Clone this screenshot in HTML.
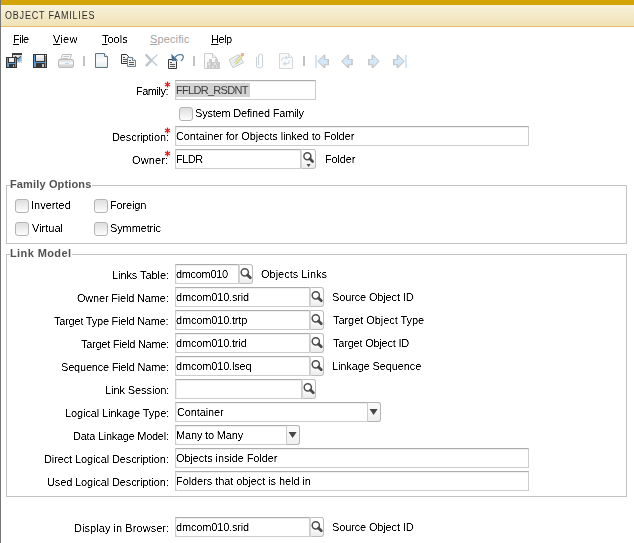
<!DOCTYPE html><html><head><meta charset="utf-8"><style>
*{margin:0;padding:0}
html,body{width:634px;height:543px;overflow:hidden;background:#fff}
body{position:relative;font-family:"Liberation Sans",sans-serif}
.r{position:absolute}
.ic{position:absolute;left:0;top:0}
.t{position:absolute;font:11px/13px "Liberation Sans",sans-serif;letter-spacing:-0.2px;white-space:pre;color:#000;background:#fff;filter:contrast(2.2)}
.menu u{text-decoration:underline;text-underline-offset:1px}
.title{position:absolute;font:10px/13px "Liberation Sans",sans-serif;letter-spacing:0.15px;color:#333;white-space:pre}
.tf{position:absolute;box-sizing:border-box;border:1px solid #cdcdcd;border-top-color:#acacac;background:#fff;box-shadow:inset 1px 1px 0 #efefef}
.sb{position:absolute;box-sizing:border-box;border:1px solid #bdbdbd;border-left-color:#d6d6d6;border-radius:0 3px 3px 0;background:linear-gradient(#fff 45%,#ececec)}
.sb svg{left:-1px;top:-1px}.db svg{left:0;top:-1px}
.db{position:absolute;box-sizing:border-box;border:1px solid #b3b3b3;border-left:0;border-radius:0 3px 3px 0;background:linear-gradient(#fbfbfb,#f0f0f0)}
.cb{position:absolute;width:14px;height:14px;box-sizing:border-box;border:1px solid #b4b4b4;border-radius:3px;background:linear-gradient(#dedede,#fdfdfd)}
.gb{position:absolute;box-sizing:border-box;border:1px solid #c2c2c2}
.gt{}
</style></head><body>
<div class="r" style="left:0;top:0;width:634px;height:5px;background:#d3a508"></div>
<div class="r" style="left:0;top:5px;width:634px;height:21px;background:linear-gradient(#f8f1da,#f0e2b6)"></div>
<div class="r" style="left:0;top:26px;width:634px;height:1px;background:#e9bd6a"></div>
<div class="t" style="left:5px;top:9.4px;font-size:10px;letter-spacing:0.88px;transform:scale(0.9,1);transform-origin:0 0;color:#2e2e2e;background:none;filter:none">OBJECT FAMILIES</div>
<div class="r" style="left:0;top:0;width:1px;height:543px;background:#777"></div>
<div class="t menu" style="left:13px;top:33px;letter-spacing:-0.500px;color:#000"><u>F</u>ile</div>
<div class="t menu" style="left:53px;top:33px;letter-spacing:0.250px;color:#000"><u>V</u>iew</div>
<div class="t menu" style="left:102px;top:33px;letter-spacing:0.000px;color:#000"><u>T</u>ools</div>
<div class="t menu" style="left:150px;top:33px;letter-spacing:0.125px;color:#a3a3a3;filter:none"><u>S</u>pecific</div>
<div class="t menu" style="left:211px;top:33px;letter-spacing:-0.500px;color:#000"><u>H</u>elp</div>
<svg class="ic" style="left:0;top:45px" width="420" height="30" viewBox="0 45 420 30" shape-rendering="auto"><defs><linearGradient id="gl" x1="0" y1="0" x2="0" y2="1"><stop offset="0" stop-color="#fafafa"/><stop offset="1" stop-color="#dadada"/></linearGradient><linearGradient id="gd" x1="0" y1="0" x2="0" y2="1"><stop offset="0" stop-color="#e6edf2"/><stop offset="0.5" stop-color="#fbfcfd"/><stop offset="1" stop-color="#dfe7ec"/></linearGradient></defs><rect x="12" y="53" width="10" height="2" fill="#3c3c3c" /><rect x="12" y="55" width="1" height="3" fill="#3c3c3c" /><rect x="13" y="55" width="9" height="8" fill="#e0e0e0" /><rect x="21" y="55" width="1" height="8" fill="#bcd3e3" /><path d="M15 56.5 L18 59 L21 56.5" stroke="#404040" stroke-width="1.3" fill="none"/><path d="M17.5 60.5 L21 57.5 M18 61.5 L21 59.8" stroke="#5ba3da" stroke-width="1.1" fill="none"/><rect x="6" y="57" width="11" height="11" fill="#363636" /><rect x="7" y="58" width="9" height="9" fill="#5a9ad0" /><rect x="8" y="57" width="7" height="6" fill="#363636" /><rect x="9" y="58" width="5" height="4" fill="#f0f0f0" /><rect x="9" y="64" width="6" height="4" fill="#363636" /><rect x="13" y="65" width="1" height="2" fill="#b8b8b8" /><rect x="33" y="54" width="14" height="14" fill="#363636" /><rect x="34" y="55" width="12" height="12" fill="#5a9ad0" /><rect x="35" y="54" width="10" height="8" fill="#363636" /><rect x="36" y="55" width="8" height="6" fill="url(#gl)"/><rect x="36" y="63" width="9" height="5" fill="#363636" /><rect x="42" y="64" width="2" height="3" fill="#c2c2c2" /><rect x="45" y="55" width="1" height="1" fill="#e8e8e8" /><path d="M62.5 54.5 H71.5 L69.5 60.5 H60.5 Z" fill="#f7f7f7" stroke="#bdbdbd"/><path d="M63.5 56.5 H69 M62.5 58.5 H68" stroke="#c4c4c4"/><rect x="58.5" y="59.5" width="15" height="8" rx="1.5" fill="#e4e4e4" stroke="#bcbcbc"/><rect x="59" y="62" width="14" height="2" fill="#f6f6f6" /><rect x="65" y="63" width="4" height="1" fill="#b5d6ee" /><rect x="59" y="65" width="14" height="2" fill="#d6d6d6" /><rect x="83" y="56" width="2" height="10" fill="#c3c3c3" /><rect x="193" y="56" width="2" height="10" fill="#c3c3c3" /><rect x="303" y="56" width="2" height="10" fill="#c3c3c3" /><path d="M95.5 53.5 H104.5 L107.5 56.5 V67.5 H95.5 Z" fill="url(#gd)" stroke="#5f7686"/><path d="M104.5 53.5 V56.5 H107.5" fill="#fff" stroke="#5f7686"/><path d="M121.5 54.5 H126.5 L128.5 56.5 V63.5 H121.5 Z" fill="#f2f2f2" stroke="#333"/><rect x="123" y="57" width="2" height="1" fill="#555" /><rect x="123" y="59" width="5" height="1" fill="#555" /><rect x="123" y="61" width="5" height="1" fill="#555" /><path d="M127.5 57.5 H132.5 L135.5 60.5 V66.5 H127.5 Z" fill="url(#gd)" stroke="#6b8597"/><path d="M132.5 57.5 V60.5 H135.5" fill="#fff" stroke="#6b8597"/><rect x="129" y="60" width="2" height="1" fill="#555" /><rect x="129" y="62" width="5" height="1" fill="#555" /><rect x="129" y="64" width="5" height="1" fill="#555" /><path d="M146.5 55.5 L157.2 65.8" stroke="#bcc8d0" stroke-width="1.3"/><path d="M146.5 65.3 L151.5 60.3" stroke="#bec6cc" stroke-width="2.4" stroke-linecap="round"/><path d="M151.5 60.3 L157.4 54.6" stroke="#b9cbd8" stroke-width="1.2"/><path d="M146.2 55.2 L150.8 59.8" stroke="#bec6cc" stroke-width="2.4" stroke-linecap="round"/><path d="M168.5 59.5 H174.5 L176.5 61.5 V68.5 H168.5 Z" fill="#efefef" stroke="#3a3a3a"/><rect x="170" y="62" width="2" height="1" fill="#555" /><rect x="170" y="64" width="5" height="1" fill="#555" /><rect x="170" y="66" width="5" height="1" fill="#555" /><path d="M171.3 53.8 L171.8 61 L178.2 60.6 Z" fill="#4a7393"/><path d="M175 57.3 Q177 54.5 180.5 54.5 Q183.5 54.8 183.3 57.5 Q183 59.5 181 60.8" stroke="#4c7595" stroke-width="1.15" fill="none"/><path d="M204.5 53.5 H212.5 L216.5 57.5 V68.5 H204.5 Z" fill="#fafafa" stroke="#cdcdcd"/><path d="M212.5 53.5 V57.5 H216.5" fill="#f0f0f0" stroke="#cdcdcd"/><rect x="209" y="59" width="3" height="3" fill="#cdcdcd" /><rect x="215" y="59" width="3" height="3" fill="#cdcdcd" /><rect x="207" y="62" width="7" height="7" fill="#cbcbcb" /><rect x="213" y="62" width="7" height="7" fill="#cbcbcb" /><rect x="208" y="63" width="2" height="2" fill="#e6e6e6" /><rect x="214" y="63" width="2" height="2" fill="#e6e6e6" /><rect x="209" y="65" width="1" height="3" fill="#dedede" /><rect x="216" y="65" width="1" height="3" fill="#dedede" /><rect x="212" y="66" width="2" height="2" fill="#e2e2e2" /><path d="M229 60 L238.5 54.5 L243.5 62.5 L233 67.8 Z" fill="#eef3f2" stroke="#bfc6c6" stroke-width="0.9"/><path d="M231 61.5 L239 57 M232.2 63.5 L240.3 59 M233.4 65.5 L241.5 61" stroke="#d6dede" stroke-width="0.8"/><path d="M235.5 63.5 L241.5 55.5" stroke="#b9c0c0" stroke-width="3.2"/><path d="M235.5 63.5 L241.5 55.5" stroke="#f3ec8c" stroke-width="1.9"/><rect x="241" y="53" width="3" height="3" fill="#e9b3a3" /><path d="M256.5 57 V66 Q256.5 68 259.5 68 Q262.5 68 262.5 66 V56 Q262.5 54 260.5 54 Q258.5 54 258.5 56 V65" fill="none" stroke="#c9d2d9" stroke-width="1"/><path d="M279.5 53.5 H288.5 L292.5 57.5 V68.5 H279.5 Z" fill="#fbfbfb" stroke="#d3d9dc"/><path d="M288.5 53.5 V57.5 H292.5" fill="#f0f2f3" stroke="#d3d9dc"/><path d="M281.8 61 V59.5 Q282 57.8 284.5 57.8 H286.5" fill="none" stroke="#c8dae6" stroke-width="1.1"/><path d="M285.5 55.6 L288.3 57.8 L285.5 60 Z" fill="#c8dae6"/><path d="M289.2 60.5 V62 Q289 63.8 286.5 63.8 H284.5" fill="none" stroke="#c8dae6" stroke-width="1.1"/><path d="M285.5 61.6 L282.7 63.8 L285.5 66 Z" fill="#c8dae6"/><path d="M317.20 61.3 L323.80 54.8 L325.40 54.8 L325.40 59 L329.00 59 L329.00 65.3 L325.40 65.3 L325.40 68.1 L323.80 68.1 Z" fill="#c6c6c6"/><path d="M318.50 61.3 L323.80 56.1 L323.80 59.7 L327.50 59.7 L327.50 64.3 L323.80 64.3 L323.80 66.6 Z" fill="#d3e9fa"/><rect x="315" y="55" width="2" height="13" fill="#d3e8f8" /><path d="M341.00 61.3 L347.60 54.8 L349.20 54.8 L349.20 59 L352.80 59 L352.80 65.3 L349.20 65.3 L349.20 68.1 L347.60 68.1 Z" fill="#c6c6c6"/><path d="M342.30 61.3 L347.60 56.1 L347.60 59.7 L351.30 59.7 L351.30 64.3 L347.60 64.3 L347.60 66.6 Z" fill="#d3e9fa"/><path d="M379.80 61.3 L373.20 54.8 L371.60 54.8 L371.60 59 L368.00 59 L368.00 65.3 L371.60 65.3 L371.60 68.1 L373.20 68.1 Z" fill="#c6c6c6"/><path d="M378.50 61.3 L373.20 56.1 L373.20 59.7 L369.50 59.7 L369.50 64.3 L373.20 64.3 L373.20 66.6 Z" fill="#d3e9fa"/><path d="M404.80 61.3 L398.20 54.8 L396.60 54.8 L396.60 59 L393.00 59 L393.00 65.3 L396.60 65.3 L396.60 68.1 L398.20 68.1 Z" fill="#c6c6c6"/><path d="M403.50 61.3 L398.20 56.1 L398.20 59.7 L394.50 59.7 L394.50 64.3 L398.20 64.3 L398.20 66.6 Z" fill="#d3e9fa"/><rect x="405" y="55" width="2" height="13" fill="#d3e8f8" /></svg>
<div class="t" style="left:136px;top:85px;letter-spacing:-0.500px;">Family:</div>
<svg class="ic" style="left:164px;top:81px" width="7" height="7" viewBox="0 0 7 7"><line x1="3.5" y1="0.6" x2="3.5" y2="6.4" stroke="#e41b1b" stroke-width="1.3"/><line x1="1" y1="2" x2="6" y2="5" stroke="#e41b1b" stroke-width="1.1"/><line x1="1" y1="5" x2="6" y2="2" stroke="#e41b1b" stroke-width="1.1"/></svg>
<div class="tf" style="left:175px;top:80px;width:141px;height:20px;"></div>
<div class="r" style="left:176px;top:83px;width:74px;height:14px;background:#d2d2d2"></div>
<div class="t" style="left:176px;top:84px;letter-spacing:-0.700px;color:#626262;background:#a5a5a5">FFLDR_RSDNT</div>
<div class="cb" style="left:179px;top:107px"></div>
<div class="t" style="left:195px;top:107px;letter-spacing:-0.200px;">System Defined Family</div>
<div class="t" style="left:112px;top:131px;letter-spacing:-0.100px;">Description:</div>
<svg class="ic" style="left:164px;top:127px" width="7" height="7" viewBox="0 0 7 7"><line x1="3.5" y1="0.6" x2="3.5" y2="6.4" stroke="#e41b1b" stroke-width="1.3"/><line x1="1" y1="2" x2="6" y2="5" stroke="#e41b1b" stroke-width="1.1"/><line x1="1" y1="5" x2="6" y2="2" stroke="#e41b1b" stroke-width="1.1"/></svg>
<div class="tf" style="left:175px;top:126px;width:354px;height:20px;"></div>
<div class="t" style="left:176px;top:130px;letter-spacing:-0.105px;">Container for Objects linked to Folder</div>
<div class="t" style="left:132px;top:154px;letter-spacing:0.167px;">Owner:</div>
<svg class="ic" style="left:164px;top:150px" width="7" height="7" viewBox="0 0 7 7"><line x1="3.5" y1="0.6" x2="3.5" y2="6.4" stroke="#e41b1b" stroke-width="1.3"/><line x1="1" y1="2" x2="6" y2="5" stroke="#e41b1b" stroke-width="1.1"/><line x1="1" y1="5" x2="6" y2="2" stroke="#e41b1b" stroke-width="1.1"/></svg>
<div class="tf" style="left:175px;top:149px;width:126px;height:20px;"></div>
<div class="sb" style="left:301px;top:149px;width:15px;height:20px"><svg class="ic" width="15" height="20" viewBox="0 0 15 20"><circle cx="6.4" cy="7.3" r="3.5" fill="none" stroke="#4d4d4d" stroke-width="1.5"/><line x1="8.9" y1="9.8" x2="11.6" y2="12.5" stroke="#474747" stroke-width="2.7" stroke-linecap="round"/><path d="M5.5 15.1 L9.7 15.1 L7.6 17.9 Z" fill="#4d4d4d"/></svg></div>
<div class="t" style="left:176px;top:153px;letter-spacing:-0.500px;">FLDR</div>
<div class="t" style="left:325px;top:153px;letter-spacing:-0.167px;">Folder</div>
<div class="gb" style="left:6px;top:185px;width:621px;height:59px"></div>
<div class="r" style="left:11px;top:185px;width:81px;height:1px;background:#fff"></div>
<div class="t" style="left:10px;top:178px;letter-spacing:0.143px;font-weight:bold;color:#5c5c5c;background:none;filter:contrast(1.3)">Family Options</div>
<div class="r" style="left:10px;top:185px;width:1px;height:1px;background:#c2c2c2"></div>
<div class="cb" style="left:15px;top:199px"></div>
<div class="t" style="left:31px;top:199px;letter-spacing:0.000px;">Inverted</div>
<div class="cb" style="left:94px;top:199px"></div>
<div class="t" style="left:110px;top:199px;letter-spacing:-0.167px;">Foreign</div>
<div class="cb" style="left:15px;top:222px"></div>
<div class="t" style="left:32px;top:222px;letter-spacing:0.000px;">Virtual</div>
<div class="cb" style="left:94px;top:222px"></div>
<div class="t" style="left:110px;top:222px;letter-spacing:-0.125px;">Symmetric</div>
<div class="gb" style="left:6px;top:254px;width:621px;height:243px"></div>
<div class="r" style="left:11px;top:254px;width:61px;height:1px;background:#fff"></div>
<div class="t" style="left:10px;top:247px;letter-spacing:0.400px;font-weight:bold;color:#5c5c5c;background:none;filter:contrast(1.3)">Link Model</div>
<div class="r" style="left:10px;top:254px;width:1px;height:1px;background:#c2c2c2"></div>
<div class="t" style="left:112px;top:269px;letter-spacing:-0.083px;">Links Table:</div>
<div class="tf" style="left:175px;top:264px;width:64px;height:20px;"></div>
<div class="sb" style="left:239px;top:264px;width:14px;height:20px"><svg class="ic" width="14" height="20" viewBox="0 0 14 20"><circle cx="5.8" cy="8.3" r="3.6" fill="none" stroke="#4d4d4d" stroke-width="1.5"/><line x1="8.5" y1="11" x2="11.3" y2="13.8" stroke="#474747" stroke-width="2.7" stroke-linecap="round"/></svg></div>
<div class="t" style="left:176px;top:268px;letter-spacing:-0.333px;">dmcom010</div>
<div class="t" style="left:261px;top:268px;letter-spacing:0.000px;">Objects Links</div>
<div class="t" style="left:77px;top:292px;letter-spacing:-0.188px;">Owner Field Name:</div>
<div class="tf" style="left:175px;top:287px;width:135px;height:20px;"></div>
<div class="sb" style="left:310px;top:287px;width:14px;height:20px"><svg class="ic" width="14" height="20" viewBox="0 0 14 20"><circle cx="5.8" cy="8.3" r="3.6" fill="none" stroke="#4d4d4d" stroke-width="1.5"/><line x1="8.5" y1="11" x2="11.3" y2="13.8" stroke="#474747" stroke-width="2.7" stroke-linecap="round"/></svg></div>
<div class="t" style="left:176px;top:291px;letter-spacing:-0.167px;">dmcom010.srid</div>
<div class="t" style="left:332px;top:291px;letter-spacing:-0.143px;">Source Object ID</div>
<div class="t" style="left:54px;top:315px;letter-spacing:-0.227px;">Target Type Field Name:</div>
<div class="tf" style="left:175px;top:310px;width:135px;height:20px;"></div>
<div class="sb" style="left:310px;top:310px;width:14px;height:20px"><svg class="ic" width="14" height="20" viewBox="0 0 14 20"><circle cx="5.8" cy="8.3" r="3.6" fill="none" stroke="#4d4d4d" stroke-width="1.5"/><line x1="8.5" y1="11" x2="11.3" y2="13.8" stroke="#474747" stroke-width="2.7" stroke-linecap="round"/></svg></div>
<div class="t" style="left:176px;top:314px;letter-spacing:-0.167px;">dmcom010.trtp</div>
<div class="t" style="left:333px;top:314px;letter-spacing:-0.056px;">Target Object Type</div>
<div class="t" style="left:81px;top:338px;letter-spacing:-0.278px;">Target Field Name:</div>
<div class="tf" style="left:175px;top:333px;width:135px;height:20px;"></div>
<div class="sb" style="left:310px;top:333px;width:14px;height:20px"><svg class="ic" width="14" height="20" viewBox="0 0 14 20"><circle cx="5.8" cy="8.3" r="3.6" fill="none" stroke="#4d4d4d" stroke-width="1.5"/><line x1="8.5" y1="11" x2="11.3" y2="13.8" stroke="#474747" stroke-width="2.7" stroke-linecap="round"/></svg></div>
<div class="t" style="left:176px;top:337px;letter-spacing:-0.167px;">dmcom010.trid</div>
<div class="t" style="left:333px;top:337px;letter-spacing:-0.214px;">Target Object ID</div>
<div class="t" style="left:61px;top:361px;letter-spacing:-0.200px;">Sequence Field Name:</div>
<div class="tf" style="left:175px;top:356px;width:135px;height:20px;"></div>
<div class="sb" style="left:310px;top:356px;width:14px;height:20px"><svg class="ic" width="14" height="20" viewBox="0 0 14 20"><circle cx="5.8" cy="8.3" r="3.6" fill="none" stroke="#4d4d4d" stroke-width="1.5"/><line x1="8.5" y1="11" x2="11.3" y2="13.8" stroke="#474747" stroke-width="2.7" stroke-linecap="round"/></svg></div>
<div class="t" style="left:176px;top:360px;letter-spacing:-0.167px;">dmcom010.lseq</div>
<div class="t" style="left:332px;top:360px;letter-spacing:-0.125px;">Linkage Sequence</div>
<div class="t" style="left:105px;top:384px;letter-spacing:-0.083px;">Link Session:</div>
<div class="tf" style="left:175px;top:379px;width:127px;height:20px;"></div>
<div class="sb" style="left:302px;top:379px;width:14px;height:20px"><svg class="ic" width="14" height="20" viewBox="0 0 14 20"><circle cx="5.8" cy="8.3" r="3.6" fill="none" stroke="#4d4d4d" stroke-width="1.5"/><line x1="8.5" y1="11" x2="11.3" y2="13.8" stroke="#474747" stroke-width="2.7" stroke-linecap="round"/></svg></div>
<div class="t" style="left:65px;top:407px;letter-spacing:-0.100px;">Logical Linkage Type:</div>
<div class="tf" style="left:175px;top:402px;width:193px;height:20px;"></div>
<div class="db" style="left:368px;top:402px;width:13px;height:20px"><svg class="ic" width="13" height="20" viewBox="0 0 13 20"><path d="M1.6 7 L9.6 7 L5.6 13 Z" fill="#454545"/></svg></div>
<div class="t" style="left:177px;top:406px;letter-spacing:-0.125px;">Container</div>
<div class="t" style="left:73px;top:430px;letter-spacing:-0.278px;">Data Linkage Model:</div>
<div class="tf" style="left:175px;top:425px;width:112px;height:20px;"></div>
<div class="db" style="left:287px;top:425px;width:13px;height:20px"><svg class="ic" width="13" height="20" viewBox="0 0 13 20"><path d="M1.6 7 L9.6 7 L5.6 13 Z" fill="#454545"/></svg></div>
<div class="t" style="left:176px;top:429px;letter-spacing:-0.167px;">Many to Many</div>
<div class="t" style="left:44px;top:453px;letter-spacing:-0.115px;">Direct Logical Description:</div>
<div class="tf" style="left:175px;top:448px;width:354px;height:20px;"></div>
<div class="t" style="left:176px;top:452px;letter-spacing:-0.100px;">Objects inside Folder</div>
<div class="t" style="left:47px;top:476px;letter-spacing:-0.125px;">Used Logical Description:</div>
<div class="tf" style="left:175px;top:471px;width:354px;height:20px;"></div>
<div class="t" style="left:176px;top:475px;letter-spacing:-0.071px;">Folders that object is held in</div>
<div class="t" style="left:74px;top:522px;letter-spacing:0.056px;">Display in Browser:</div>
<div class="tf" style="left:175px;top:517px;width:135px;height:20px;"></div>
<div class="sb" style="left:310px;top:517px;width:14px;height:20px"><svg class="ic" width="14" height="20" viewBox="0 0 14 20"><circle cx="5.8" cy="8.3" r="3.6" fill="none" stroke="#4d4d4d" stroke-width="1.5"/><line x1="8.5" y1="11" x2="11.3" y2="13.8" stroke="#474747" stroke-width="2.7" stroke-linecap="round"/></svg></div>
<div class="t" style="left:176px;top:521px;letter-spacing:-0.167px;">dmcom010.srid</div>
<div class="t" style="left:332px;top:521px;letter-spacing:-0.143px;">Source Object ID</div>
</body></html>
